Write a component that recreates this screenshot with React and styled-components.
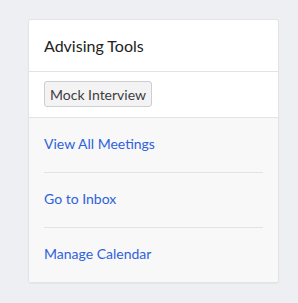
import React from "react";
import styled, { createGlobalStyle } from "styled-components";

const Global = createGlobalStyle`
  html, body { margin: 0; padding: 0; background: #eeeff3; }
  body { font-family: Lato, "Noto Sans", Arial, sans-serif; }
  * { box-sizing: border-box; }
`;

const Page = styled.div`
  padding: 19px 19px 21px 28px;
  min-height: 303px;
`;

const Card = styled.section`
  background: #fff;
  border: 1px solid #e2e3e7;
  border-radius: 3px;
  box-shadow: 0 1px 1px rgba(0, 0, 0, 0.04);
  overflow: hidden;
`;

const Header = styled.h2`
  margin: 0;
  padding: 15px 15px 15px;
  font-size: 16px;
  line-height: 21px;
  font-weight: 400;
  color: #222;
  border-bottom: 1px solid #e2e3e7;
`;

const Actions = styled.div`
  padding: 9px 15px 10px;
  border-bottom: 1px solid #e2e3e7;
  display: flex;
`;

const Button = styled.button`
  font-family: inherit;
  font-size: 14px;
  height: 26px;
  padding: 0 5px;
  color: #3d3d40;
  background: #f3f3f4;
  border: 1px solid #cdced2;
  border-radius: 3px;
  cursor: pointer;
`;

const Links = styled.ul`
  list-style: none;
  margin: 0;
  padding: 0 15px;
  background: #f8f8f9;
`;

const Item = styled.li`
  padding: 16px 0 18px;
  font-size: 14px;
  line-height: 20px;
  border-top: ${(p) => (p.$first ? "none" : "1px solid #e2e3e7")};
`;

const Link = styled.a`
  font-size: 14px;
  color: #2e62d9;
  text-decoration: none;
`;

const links = ["View All Meetings", "Go to Inbox", "Manage Calendar"];

export default function App() {
  return (
    <>
      <Global />
      <Page>
        <Card>
          <Header>Advising Tools</Header>
          <Actions>
            <Button>Mock Interview</Button>
          </Actions>
          <Links>
            {links.map((l, i) => (
              <Item key={l} $first={i === 0}>
                <Link href="#">{l}</Link>
              </Item>
            ))}
          </Links>
        </Card>
      </Page>
    </>
  );
}
